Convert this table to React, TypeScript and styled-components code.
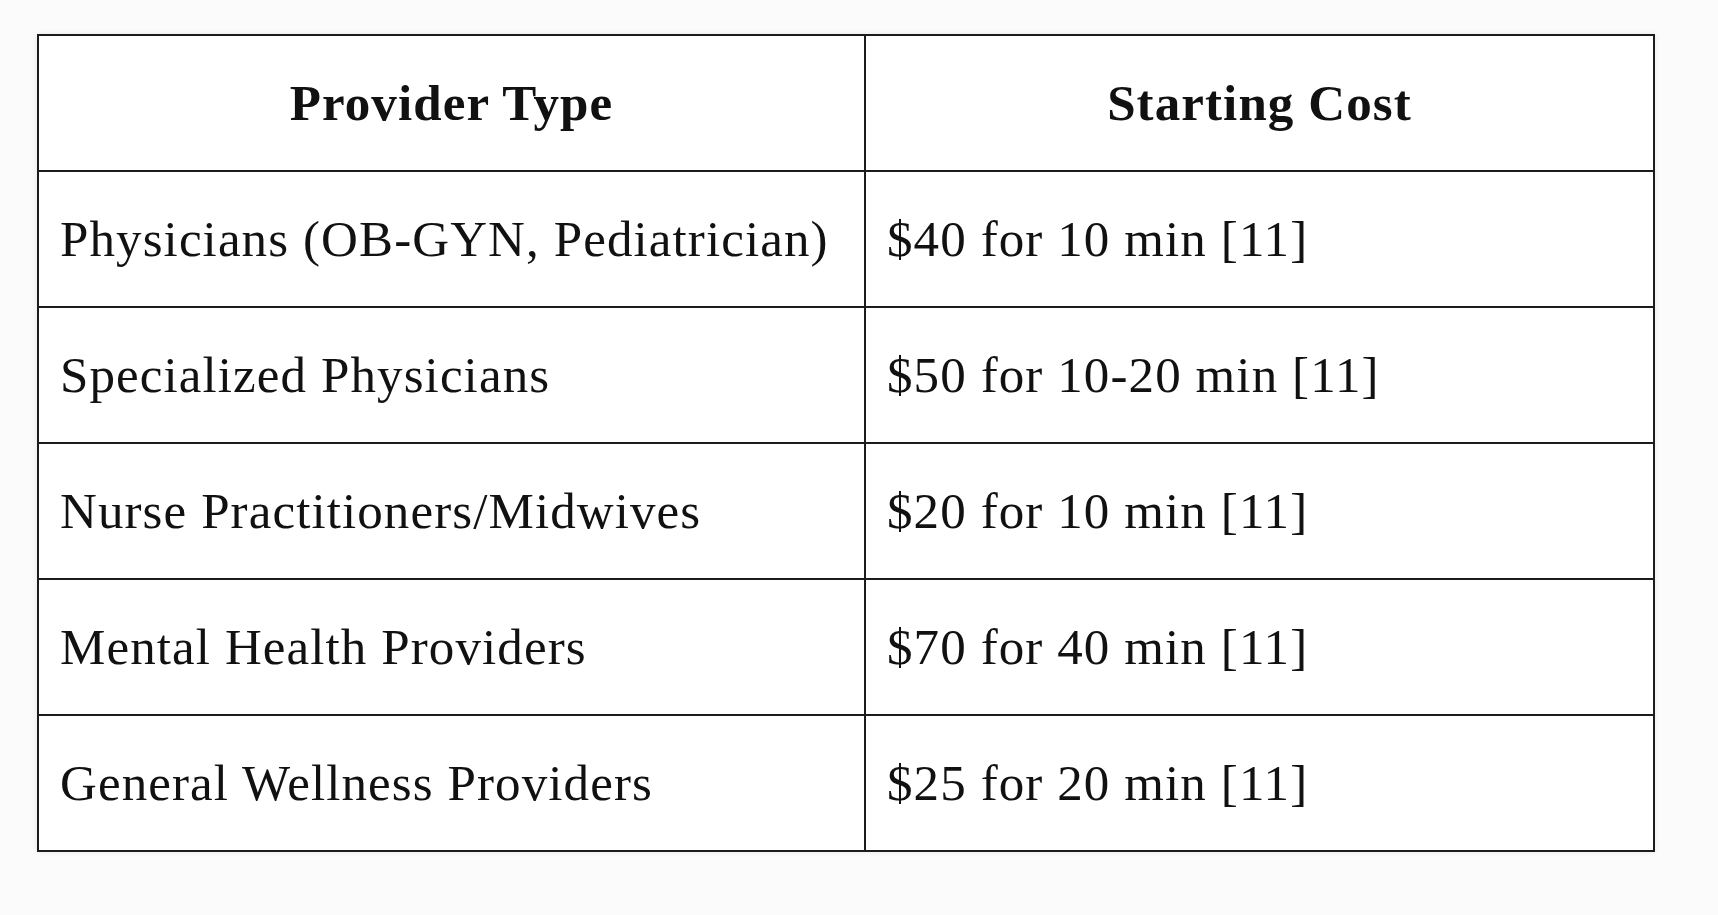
import React from 'react';
import styled, { createGlobalStyle } from 'styled-components';

const GlobalStyle = createGlobalStyle`
  html, body {
    margin: 0;
    padding: 0;
    background: #fbfbfb;
  }
  * {
    box-sizing: border-box;
  }
`;

const Page = styled.div`
  padding: 34px 0 0 37px;
  width: 1718px;
  height: 915px;
  font-family: 'Liberation Serif', 'Times New Roman', serif;
  color: #111;
`;

const Table = styled.table`
  width: 1618px;
  border-collapse: collapse;
  background: #fff;
  box-shadow: 0 0 6px rgba(0, 0, 0, 0.08);
  table-layout: fixed;
`;

const Cell = styled.td<{ $head?: boolean }>`
  height: 136px;
  border: 2px solid #1c1c1c;
  padding: 0 21px;
  font-size: 51px;
  letter-spacing: 1.1px;
  font-weight: ${p => (p.$head ? 700 : 400)};
  text-align: ${p => (p.$head ? 'center' : 'left')};
  vertical-align: middle;
  white-space: nowrap;
`;

const rows = [
  ['Physicians (OB-GYN, Pediatrician)', '$40 for 10 min [11]'],
  ['Specialized Physicians', '$50 for 10-20 min [11]'],
  ['Nurse Practitioners/Midwives', '$20 for 10 min [11]'],
  ['Mental Health Providers', '$70 for 40 min [11]'],
  ['General Wellness Providers', '$25 for 20 min [11]'],
];

const App: React.FC = () => (
  <Page>
    <GlobalStyle />
    <Table>
      <colgroup>
        <col style={{ width: 827 }} />
        <col />
      </colgroup>
      <thead>
        <tr>
          <Cell as="th" $head>Provider Type</Cell>
          <Cell as="th" $head>Starting Cost</Cell>
        </tr>
      </thead>
      <tbody>
        {rows.map(([type, cost]) => (
          <tr key={type}>
            <Cell>{type}</Cell>
            <Cell>{cost}</Cell>
          </tr>
        ))}
      </tbody>
    </Table>
  </Page>
);

export default App;
